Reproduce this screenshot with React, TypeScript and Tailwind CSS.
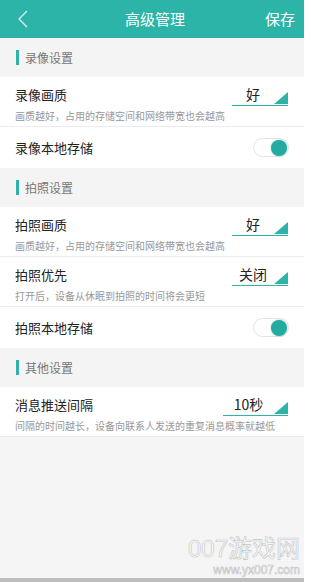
import React from "react";

const font = { fontFamily: '"Noto Sans CJK SC", "Noto Sans", sans-serif' };
const wmFont = { fontFamily: '"Liberation Sans", "Noto Sans CJK SC", sans-serif', WebkitTextStroke: "0.6px #c4c4c4" };

function Section({ title }: { title: string }) {
  return (
    <div className="h-[39px] bg-[#f4f4f4] flex items-center pl-[16px]">
      <div className="w-[3px] h-[15px] bg-[#2fb3a8] mr-[6px]" />
      <span className="text-[12px] text-[#777]">{title}</span>
    </div>
  );
}

function Select({ value, wide }: { value: string; wide?: boolean }) {
  return (
    <div className={`relative ${wide ? "w-[65px]" : "w-[56px]"} h-[22px] border-b border-[#2fb3a8] flex items-end justify-center pr-[14px]`}>
      <span className="text-[14px] text-[#222] leading-[22px]">{value}</span>
      <svg className="absolute right-[0px] bottom-[1px]" width="14" height="12" viewBox="0 0 14 12">
        <polygon points="14,0 14,12 0,12" fill="#2fb3a8" />
      </svg>
    </div>
  );
}

function SelectRow({ title, value, desc, wide }: { title: string; value: string; desc: string; wide?: boolean }) {
  return (
    <div className="bg-white border-b border-[#ececec] pl-[15px] pr-[16px] pt-[7px] pb-[4px]">
      <div className="flex items-center justify-between h-[22px]">
        <span className="text-[13px] text-[#222]">{title}</span>
        <Select value={value} wide={wide} />
      </div>
      <div className="text-[10px] text-[#999] mt-[4px] leading-[12px] whitespace-nowrap">{desc}</div>
    </div>
  );
}

function ToggleRow({ title }: { title: string }) {
  return (
    <div className="bg-white h-[41px] flex items-center justify-between pl-[15px] pr-[15px]">
      <span className="text-[13px] text-[#222]">{title}</span>
      <div className="w-[36px] h-[19px] rounded-full border border-[#e4e4e4] bg-white flex items-center justify-end pr-[1px]">
        <div className="w-[16px] h-[16px] rounded-full bg-[#24ab9f] shadow-[0_0_2px_rgba(36,171,159,0.6)]" />
      </div>
    </div>
  );
}

export default function App() {
  return (
    <div className="w-[311px] h-[582px] bg-white flex" style={font}>
      <div className="w-[304px] h-[582px] bg-[#f5f5f5] flex flex-col relative">
        <div className="h-[38px] shrink-0 bg-[#2cb4a8] flex items-center justify-between px-[14px] text-white">
          <svg width="12" height="18" viewBox="0 0 12 18" className="ml-[3px]">
            <polyline points="10,1 2,9 10,17" fill="none" stroke="#d8f3f0" strokeWidth="1.3" />
          </svg>
          <span className="text-[15px] ml-[16px]">高级管理</span>
          <span className="text-[15px] -mr-[5px]">保存</span>
        </div>
        <Section title="录像设置" />
        <SelectRow title="录像画质" value="好" desc="画质越好，占用的存储空间和网络带宽也会越高" />
        <ToggleRow title="录像本地存储" />
        <Section title="拍照设置" />
        <SelectRow title="拍照画质" value="好" desc="画质越好，占用的存储空间和网络带宽也会越高" />
        <SelectRow title="拍照优先" value="关闭" desc="打开后，设备从休眠到拍照的时间将会更短" />
        <ToggleRow title="拍照本地存储" />
        <Section title="其他设置" />
        <SelectRow title="消息推送间隔" value="10秒" wide desc="间隔的时间越长，设备向联系人发送的重复消息概率就越低" />
        <div className="flex-1" />
        <div className="absolute right-[4px] bottom-[5px] flex flex-col items-end gap-[1px] text-[#fafafa]" style={wmFont}>
          <span className="text-[24px] leading-[27px]">007游戏网</span>
          <span className="text-[12px] leading-[14px]">www.yx007.com</span>
        </div>
        <div className="h-[4px] shrink-0 bg-[#bdbdbd]" />
      </div>
    </div>
  );
}
